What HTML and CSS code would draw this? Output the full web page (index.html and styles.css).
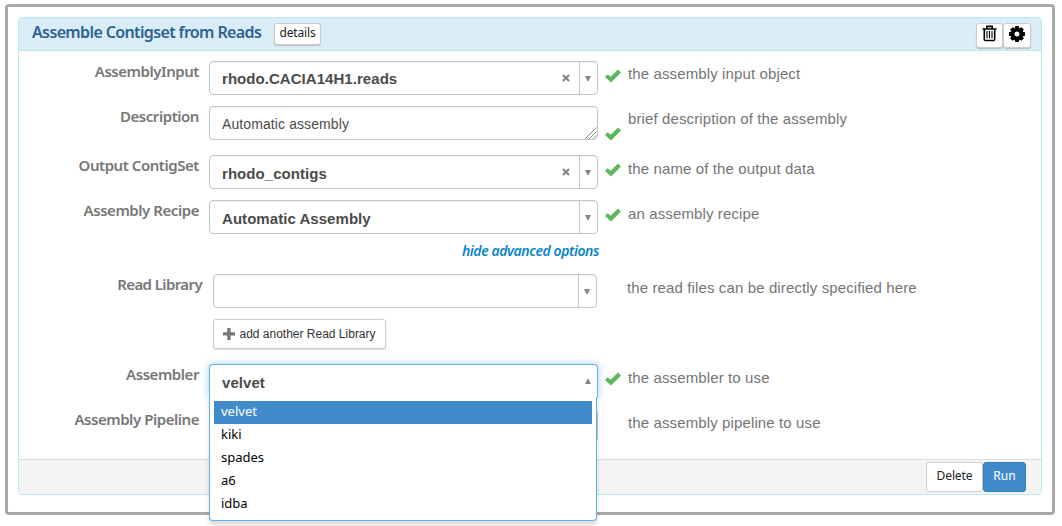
FILE: index.html
```html
<!DOCTYPE html>
<html lang="en">
<head>
<meta charset="utf-8">
<title>Assemble Contigset from Reads</title>
<link rel="stylesheet" href="styles.css">
</head>
<body>
<svg class="defs" width="0" height="0" aria-hidden="true">
  <symbol id="check" viewBox="0 0 16 14"><path d="M0 8 2.6 5.2 5.7 7.8 13 .5 16 3.4 6 13.6Z"/></symbol>
  <symbol id="cross" viewBox="0 0 8 8"><path d="M.9 1 7.1 7M7.1 1 .9 7" fill="none" stroke="#888" stroke-width="2.3"/></symbol>
  <symbol id="down" viewBox="0 0 6 5"><path d="M0 0H6L3.6 5H2.4Z"/></symbol>
</svg>
<main class="frame">
  <section class="panel">
    <header class="panel-header">
      <h1 class="title">Assemble Contigset from Reads</h1>
      <button class="btn details">details</button>
      <div class="tools">
        <button class="btn tool" aria-label="Remove"><svg width="15" height="17" viewBox="0 0 15 17"><path d="M.5 4h14M4.8 3.5V1.4h5.4v2.1M2.3 4v10.2q0 1.3 1.3 1.3h7.8q1.3 0 1.3-1.3V4" fill="none" stroke="#000" stroke-width="1.6"/><path d="M5 6v7.2M7.5 6v7.2M10 6v7.2" stroke="#000" stroke-width="1.1"/></svg></button>
        <button class="btn tool gear" aria-label="Settings"><svg width="16" height="16" viewBox="-8 -8 16 16"><circle r="4.3" fill="none" stroke="#000" stroke-width="3.6"/><path id="tooth" d="M-1.7-8h3.4l.7 3h-4.8zM-1.7 8h3.4l.7-3h-4.8z"/><use href="#tooth" transform="rotate(45)"/><use href="#tooth" transform="rotate(90)"/><use href="#tooth" transform="rotate(135)"/></svg></button>
      </div>
    </header>
    <div class="form">
      <div class="row">
        <label class="label">AssemblyInput</label>
        <div class="field select"><b class="value">rhodo.CACIA14H1.reads</b><svg class="clear"><use href="#cross"/></svg><span class="arrow"><svg><use href="#down"/></svg></span></div>
        <svg class="check"><use href="#check"/></svg><span class="hint">the assembly input object</span>
      </div>
      <div class="row row-text">
        <label class="label">Description</label>
        <div class="field area"><span>Automatic assembly</span><svg class="grip" width="12" height="12" viewBox="0 0 12 12"><path d="M0 12 11.5.5M4 12l7.5-7.5M8 12l3.5-3.5" fill="none" stroke="#888" stroke-width="1"/></svg></div>
        <svg class="check low"><use href="#check"/></svg><span class="hint">brief description of the assembly</span>
      </div>
      <div class="row">
        <label class="label">Output ContigSet</label>
        <div class="field select"><b class="value lower">rhodo_contigs</b><svg class="clear"><use href="#cross"/></svg><span class="arrow"><svg><use href="#down"/></svg></span></div>
        <svg class="check"><use href="#check"/></svg><span class="hint lower-hint">the name of the output data</span>
      </div>
      <div class="row row-recipe">
        <label class="label">Assembly Recipe</label>
        <div class="field select"><b class="value lower">Automatic Assembly</b><span class="arrow"><svg><use href="#down"/></svg></span></div>
        <svg class="check"><use href="#check"/></svg><span class="hint lower-hint">an assembly recipe</span>
      </div>
      <a class="advanced">hide advanced options</a>
      <div class="row row-library">
        <label class="label">Read Library</label>
        <div class="field select"><span class="arrow"><svg><use href="#down"/></svg></span></div>
        <span></span><span class="hint lower-hint">the read files can be directly specified here</span>
      </div>
      <div class="row row-library">
        <span></span>
        <button class="btn add"><svg width="12" height="12" viewBox="0 0 12 12"><path d="M4.2 0h3.4v4.2H12v3.4H7.6V12H4.2V7.6H0V4.2h4.2z" fill="#777"/></svg><span>add another Read Library</span></button>
      </div>
      <div class="row">
        <label class="label">Assembler</label>
        <div class="field select open"><b class="value lower">velvet</b><span class="arrow up"><svg><use href="#down"/></svg></span>
          <ul class="menu"><li class="active">velvet</li><li>kiki</li><li>spades</li><li>a6</li><li>idba</li></ul>
        </div>
        <svg class="check"><use href="#check"/></svg><span class="hint lower-hint">the assembler to use</span>
      </div>
      <div class="row">
        <label class="label">Assembly Pipeline</label>
        <div class="field select"></div>
        <span></span><span class="hint lower-hint">the assembly pipeline to use</span>
      </div>
    </div>
    <footer class="panel-footer">
      <button class="btn delete">Delete</button>
      <button class="btn run">Run</button>
    </footer>
  </section>
</main>
</body>
</html>
```
FILE: styles.css
```css
* { box-sizing: border-box; }
body { margin: 0; height: 526px; overflow: hidden; padding: 4px 7px 0 5px; background: #fff; font-family: "Noto Sans", sans-serif; }
.defs { display: none; }
.frame { width: 1050px; height: 511px; border: 3px solid #a9a9a9; border-radius: 4px; padding: 10px; }
.panel { width: 1024px; height: 478px; border: 1px solid #bce8f1; border-radius: 4px; display: flex; flex-direction: column; }
.panel-header { height: 33px; flex: none; background: #d9edf7; border-bottom: 1px solid #bce8f1; border-radius: 3px 3px 0 0; display: flex; align-items: flex-start; padding: 5px 10px 0 13px; }
.title { margin: -3px 0 0; width: 242px; font-size: 16px; line-height: 24px; font-weight: 600; letter-spacing: -.63px; color: #2d6391; white-space: nowrap; }
.btn { display: flex; align-items: center; justify-content: center; margin: 0; padding: 0; background: #fff; border: 1px solid #ccc; border-radius: 3px; color: #222; font: 12px "Noto Sans", sans-serif; white-space: nowrap; }
.details { width: 47px; height: 22px; padding-bottom: 3px; letter-spacing: -.15px; box-shadow: 0 1px 1px #bbb; }
.tools { display: flex; margin-left: auto; }
.tool { width: 27px; height: 25px; padding-bottom: 4px; box-shadow: 0 1px 1px #bbb; }
.gear { width: 28px; }
.form { flex: 1; padding-top: 10px; display: flex; flex-direction: column; }
.row { height: 45px; flex: none; display: grid; grid-template-columns: 180px 389px 16px 1fr; align-items: start; }
.row-text { height: 49px; }
.row-recipe { height: 34px; }
.label { text-align: right; white-space: nowrap; font-size: 15px; font-weight: 600; line-height: 20px; letter-spacing: -.45px; color: #777; }
.field { position: relative; margin-left: 10px; width: 389px; height: 34px; border: 1px solid #c5c5c5; border-radius: 4px; background: #fff; box-shadow: inset 0 1px 1px rgba(0,0,0,.06); display: flex; align-items: center; font-family: "Liberation Sans", Arial, sans-serif; color: #4b4b4b; }
.value { padding: 1px 0 0 12px; font-size: 15px; letter-spacing: .05px; }
.lower { padding-top: 3px; }
.area { padding-left: 12px; font-size: 14px; letter-spacing: .1px; }
.area span { padding-top: 2px; }
.grip { position: absolute; right: 0; bottom: 0; }
.clear { width: 8px; height: 8px; margin-left: auto; margin-right: 9px; }
.arrow { width: 18px; height: 32px; border-left: 1px solid #c5c5c5; display: flex; align-items: center; justify-content: center; padding: 0 1px 0 0; }
.arrow:not(.clear + .arrow) { margin-left: auto; }
.arrow svg { width: 6px; height: 5px; fill: #888; }
.check { width: 16px; height: 14px; margin: 8px 0 0 16.5px; fill: #5cb85c; overflow: visible; }
.low { margin-top: 21px; }
.hint { padding-left: 24px; font: 15px/26px "Liberation Sans", Arial, sans-serif; letter-spacing: .12px; color: #757575; white-space: nowrap; }
.lower-hint { line-height: 28px; }
.advanced { height: 40px; width: 580px; text-align: right; font-size: 14px; font-style: italic; font-weight: 600; line-height: 33px; letter-spacing: -.42px; color: #0a85cc; }
.row-library { grid-template-columns: 184px 384px 16px 1fr; }
.row-library .label { padding-right: 1px; letter-spacing: -.6px; }
.row-library .field { width: 384px; }
.add { margin-left: 10px; width: 173px; height: 30px; gap: 4px; font: 12px "Liberation Sans", Arial, sans-serif; color: #333; box-shadow: 0 1px 1px #ddd; }
.open { z-index: 2; border-color: #66afe9; border-bottom-color: transparent; border-radius: 4px 4px 0 0; box-shadow: 0 0 8px rgba(102,175,233,.55); }
.open .arrow { border: 0; padding-right: 0; }
.up svg { transform: rotate(180deg); }
.menu { position: absolute; left: -1px; top: 32px; width: 388px; height: 124px; margin: 0; padding: 4px; list-style: none; background: #fff; border: 1px solid #66afe9; border-top: 0; border-radius: 0 0 4px 4px; box-shadow: 0 4px 5px rgba(0,0,0,.15); font: 13px/21px "Noto Sans", sans-serif; color: #000; }
.menu li { height: 23px; padding-left: 7px; }
.menu .active { background: #428bca; color: #fff; }
.panel-footer { height: 35px; flex: none; padding: 2px 15px 0; display: flex; justify-content: flex-end; background: #f4f4f4; border-top: 1px solid #ddd; border-radius: 0 0 3px 3px; }
.delete { width: 57px; height: 30px; padding-bottom: 3px; letter-spacing: -.1px; }
.run { width: 43px; height: 30px; padding-bottom: 3px; background: #428bca; border-color: #357ebd; color: #fff; }
```
